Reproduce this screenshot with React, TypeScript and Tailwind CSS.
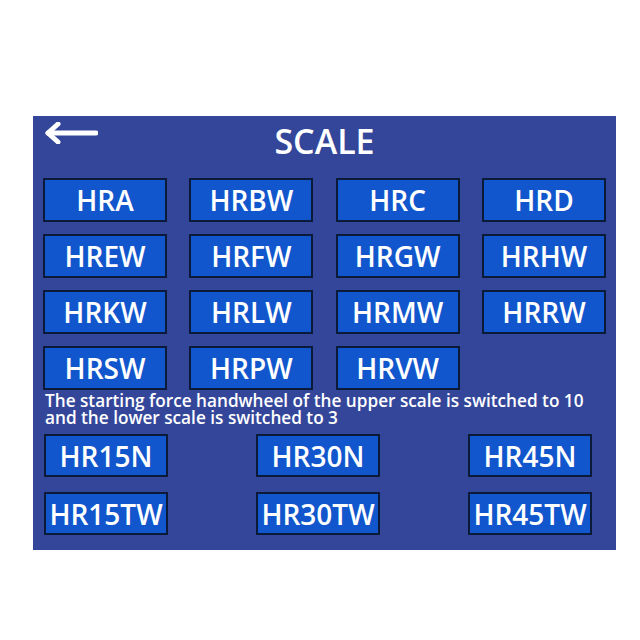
const topScales = [
  'HRA', 'HRBW', 'HRC', 'HRD',
  'HREW', 'HRFW', 'HRGW', 'HRHW',
  'HRKW', 'HRLW', 'HRMW', 'HRRW',
  'HRSW', 'HRPW', 'HRVW',
];

const superficialScales = ['HR15N', 'HR30N', 'HR45N', 'HR15TW', 'HR30TW', 'HR45TW'];

function ScaleButton({ label, tall = true }: { label: string; tall?: boolean }) {
  return (
    <button
      className={`flex w-[124px] items-center justify-center border-2 border-[#0c1a3a] bg-[#1156cc] text-[28px] font-semibold text-white ${
        tall ? 'h-[44px]' : 'h-[43px]'
      }`}
    >
      {label}
    </button>
  );
}

function BackArrow() {
  return (
    <svg width="54" height="22" viewBox="0 0 54 22" fill="none">
      <path d="M4 11H52" stroke="white" strokeWidth="5" strokeLinecap="round" />
      <path d="M14 2L4 11L14 20" stroke="white" strokeWidth="5" strokeLinecap="round" strokeLinejoin="round" />
    </svg>
  );
}

export default function App() {
  return (
    <div className="h-[640px] w-[640px] bg-white pl-[33px] pt-[116px]" style={{ fontFamily: '"Open Sans", "Liberation Sans", sans-serif' }}>
      <div className="w-[583px] bg-[#33469a] pb-[15px]">
        <div className="grid h-[62px] grid-cols-[1fr_auto_1fr] items-start">
          <div className="pl-[11px] pt-[6px]">
            <BackArrow />
          </div>
          <h1 className="pt-[2px] text-[34px] font-semibold leading-[46px] text-white">SCALE</h1>
          <div />
        </div>

        <div className="grid grid-cols-[repeat(4,124px)] justify-between gap-y-3 px-[10px]">
          {topScales.map((s) => (
            <ScaleButton key={s} label={s} />
          ))}
        </div>

        <p className="mt-[2px] pl-[12px] text-[17.2px] font-semibold leading-[17px] text-white">
          The starting force handwheel of the upper scale is switched to 10
          <br />
          and the lower scale is switched to 3
        </p>

        <div className="mt-[8px] grid grid-cols-[124px_124px_124px] gap-x-[88px] gap-y-[15px] pl-[11px]">
          {superficialScales.map((s) => (
            <ScaleButton key={s} label={s} tall={false} />
          ))}
        </div>
      </div>
    </div>
  );
}
